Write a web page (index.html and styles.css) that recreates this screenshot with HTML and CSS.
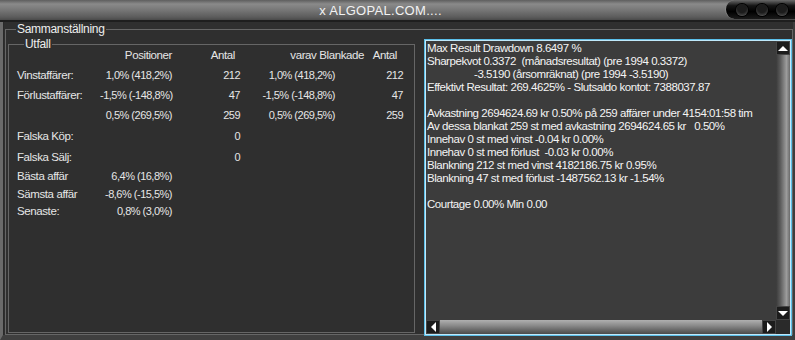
FILE: index.html
```html
<!DOCTYPE html>
<html lang="sv">
  <head>
    <meta charset="UTF-8" />
    <title>ALGOPAL.COM</title>
    <link rel="stylesheet" href="styles.css">
  </head>
  <body>
    <div class="window">
      <!-- title bar -->
      <div class="titlebar">
        <span class="title">x ALGOPAL.COM....</span>
        <div class="winbtns">
          <span class="dot"></span>
          <span class="dot"></span>
          <span class="dot"></span>
        </div>
      </div>

      <div class="frame">
        <fieldset class="group outer">
          <legend>Sammanställning</legend>
          <div class="cols">
            <fieldset class="group inner">
              <legend>Utfall</legend>
              <div class="stats">
                <span></span>
                <span class="hd">Positioner</span>
                <span class="hd hd-antal">Antal</span>
                <span class="hd hd-blank">varav Blankade</span>
                <span class="hd hd-antal2">Antal</span>

                <span class="lbl">Vinstaffärer:</span>
                <span class="num">1,0% (418,2%)</span>
                <span class="num">212</span>
                <span class="num">1,0% (418,2%)</span>
                <span class="num">212</span>

                <span class="lbl">Förlustaffärer:</span>
                <span class="num">-1,5% (-148,8%)</span>
                <span class="num">47</span>
                <span class="num">-1,5% (-148,8%)</span>
                <span class="num">47</span>

                <span class="lbl"></span>
                <span class="num">0,5% (269,5%)</span>
                <span class="num">259</span>
                <span class="num">0,5% (269,5%)</span>
                <span class="num">259</span>

                <span class="lbl">Falska Köp:</span>
                <span></span>
                <span class="num">0</span>
                <span></span>
                <span></span>

                <span class="lbl">Falska Sälj:</span>
                <span></span>
                <span class="num">0</span>
                <span></span>
                <span></span>

                <span class="lbl">Bästa affär</span>
                <span class="num">6,4% (16,8%)</span>
                <span></span>
                <span></span>
                <span></span>

                <span class="lbl">Sämsta affär</span>
                <span class="num">-8,6% (-15,5%)</span>
                <span></span>
                <span></span>
                <span></span>

                <span class="lbl">Senaste:</span>
                <span class="num">0,8% (3,0%)</span>
                <span></span>
                <span></span>
                <span></span>
              </div>
            </fieldset>

            <!-- report text box -->
            <div class="report">
              <div class="report-main">
                <div class="report-text">
                  <div>Max Result Drawdown 8.6497 %</div>
                  <div>Sharpekvot 0.3372&nbsp; (månadsresultat) (pre 1994 0.3372)</div>
                  <div class="indent">-3.5190 (årsomräknat) (pre 1994 -3.5190)</div>
                  <div>Effektivt Resultat: 269.4625% - Slutsaldo kontot: 7388037.87</div>
                  <div>&nbsp;</div>
                  <div>Avkastning 2694624.69 kr 0.50% på 259 affärer under 4154:01:58 tim</div>
                  <div>Av dessa blankat 259 st med avkastning 2694624.65 kr&nbsp;&nbsp; 0.50%</div>
                  <div>Innehav 0 st med vinst -0.04 kr 0.00%</div>
                  <div>Innehav 0 st med förlust&nbsp; -0.03 kr 0.00%</div>
                  <div>Blankning 212 st med vinst 4182186.75 kr 0.95%</div>
                  <div>Blankning 47 st med förlust -1487562.13 kr -1.54%</div>
                  <div>&nbsp;</div>
                  <div>Courtage 0.00% Min 0.00</div>
                </div>
                <div class="vscroll">
                  <span class="arrow up"></span>
                  <span class="vtrack"></span>
                  <span class="arrow down"></span>
                </div>
              </div>
              <div class="hbar">
                <div class="hscroll">
                  <span class="arrow left"></span>
                  <span class="htrack"></span>
                  <span class="arrow right"></span>
                </div>
                <span class="corner"></span>
              </div>
            </div>
          </div>
        </fieldset>
      </div>
    </div>
  </body>
</html>
```

FILE: styles.css
```css
body {
  margin: 0;
  background: #2f2f2f;
  font-family: "Liberation Sans", Arial, sans-serif;
  font-size: 11.5px;
  letter-spacing: -0.4px;
  color: #e6e6e6;
}

.window {
  width: 795px;
  height: 340px;
  display: flex;
  flex-direction: column;
  overflow: hidden;
  background: #2f2f2f;
}

/* title bar */
.titlebar {
  height: 20px;
  flex: none;
  display: flex;
  align-items: center;
  justify-content: center;
  position: relative;
  background: linear-gradient(#5e5e5e 0px, #8a8a8a 4px, #7a7a7a 9px, #5c5c5c 17px, #4a4a4a 20px);
  border-bottom: 2px solid #1e1e1e;
}

.title {
  font-size: 13px;
  letter-spacing: 0.3px;
  color: #f2f2f2;
  margin-right: 34px;
}

.winbtns {
  position: absolute;
  right: 0;
  top: 0;
  height: 19px;
  width: 70px;
  display: flex;
  align-items: center;
  gap: 8px;
  padding-left: 10px;
  box-sizing: border-box;
  background: linear-gradient(#6a6a6a, #151515 30%, #000 60%, #1a1a1a 100%);
  border-radius: 10px 0 0 10px;
  border-left: 1px solid #888;
}

.dot {
  width: 12px;
  height: 12px;
  flex: none;
  border-radius: 50%;
  background: radial-gradient(circle at 50% 35%, #1c1c1c 45%, #3c3c3c 70%, #9a9a9a 100%);
  box-shadow: 0 0 0 1px #000;
}

/* body frame */
.frame {
  flex: 1;
  display: flex;
  border-left: 3px solid #6a6a6a;
  border-right: 2px solid #3c3c3c;
  border-bottom: 5px solid #3f3f3f;
  box-shadow: inset 1px 0 0 #2a2a2a;
}

.group {
  margin: 0;
  border: 1px solid #666;
  min-width: 0;
}

.group legend {
  padding: 0 1px;
  line-height: 13px;
  color: #eeeeee;
}

.outer {
  flex: 1;
  margin: 1px 0 0 2px;
  padding: 0 0 0 2px;
  display: flex;
}

.outer > legend {
  margin-left: 8px;
  font-size: 12px;
  letter-spacing: -0.3px;
}

.cols {
  flex: 1;
  display: flex;
  gap: 9px;
  margin-top: 2px;
}

.inner {
  width: 407px;
  box-sizing: border-box;
  padding: 0 0 0 8px;
  margin-bottom: 1px;
}

.inner > legend {
  margin-left: 7px;
  font-size: 12px;
  letter-spacing: -0.3px;
}

/* stats grid */
.stats {
  display: grid;
  grid-template-columns: 83px 72px 68px 95px 68px;
  grid-template-rows: 20px 20px 20px 20px 21px 21px 18px 17px 17px;
  align-items: center;
  margin-top: -6px;
  white-space: nowrap;
}

.num {
  text-align: right;
  font-size: 11px;
  letter-spacing: -0.5px;
}

.hd {
  text-align: right;
}

.hd-antal {
  padding-right: 5px;
}

.hd-blank {
  margin-right: -29px;
}

.hd-antal2 {
  padding-right: 6px;
}

/* report box */
.report {
  width: 368px;
  margin-top: 1px;
  margin-bottom: -2px;
  display: flex;
  flex-direction: column;
  border: 1px solid #5bbfe9;
  box-shadow: inset 0 0 0 1px #bfe8fa;
  padding: 1px;
  background: #3c3c3c;
  box-sizing: border-box;
}

.report-main {
  flex: 1;
  display: flex;
  min-height: 0;
}

.report-text {
  flex: 1;
  padding: 1px 0 0 1px;
  line-height: 13px;
  letter-spacing: -0.45px;
  color: #f4f4f4;
  white-space: nowrap;
  overflow: hidden;
}

.indent {
  padding-left: 47px;
}

.vscroll {
  width: 14px;
  display: flex;
  flex-direction: column;
  background: #333;
}

.vtrack {
  flex: 1;
  background: linear-gradient(90deg, #3a3a3a, #5a5a5a 30%, #9c9c9c 75%, #6a6a6a);
}

.hbar {
  height: 14px;
  display: flex;
}

.hscroll {
  flex: 1;
  display: flex;
}

.htrack {
  flex: 1;
  background: linear-gradient(#b0b0b0, #8a8a8a 40%, #4a4a4a);
}

.corner {
  width: 14px;
  background: #2a2a2a;
}

.arrow {
  width: 14px;
  height: 14px;
  flex: none;
  background: #1c1c1c;
  display: flex;
  align-items: center;
  justify-content: center;
  box-shadow: inset 0 0 0 1px #444;
}

.arrow::before {
  content: "";
  width: 0;
  height: 0;
  border: 5px solid transparent;
}

.arrow.up::before {
  border-bottom-color: #fff;
  border-top-width: 0;
}

.arrow.down::before {
  border-top-color: #fff;
  border-bottom-width: 0;
}

.arrow.left::before {
  border-right-color: #fff;
  border-left-width: 0;
}

.arrow.right::before {
  border-left-color: #fff;
  border-right-width: 0;
}
```
